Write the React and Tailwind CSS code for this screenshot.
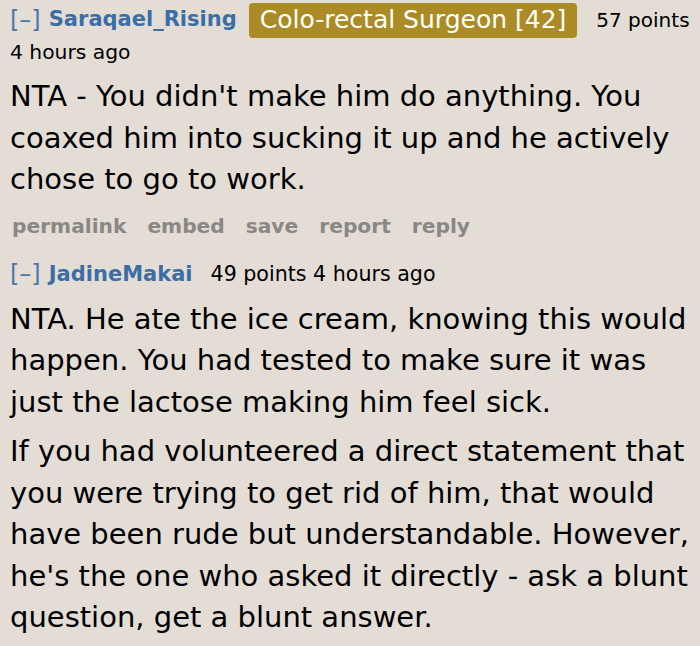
export default function App() {
  const font = { fontFamily: '"DejaVu Sans", Verdana, sans-serif' };
  return (
    <div className="h-[646px] w-[700px] overflow-hidden bg-[#e3ddd6] text-black" style={font}>
      <div className="pl-[10px] pr-[6px] pt-[2px]">
        <div className="flex h-[36px] items-center text-[21px]">
          <span className="text-[24px] font-normal text-[#4a78ad]">[–]</span>
          <span className="ml-[8px] font-bold text-[#3b6ea5]">Saraqael_Rising</span>
          <span className="ml-[12px] flex h-[35px] items-center rounded-[4px] bg-[#ab8b26] px-[11px] text-[25px] text-white">
            Colo-rectal Surgeon [42]
          </span>
          <span className="ml-[19px] text-[20px]">57 points</span>
        </div>
        <div className="text-[20.3px] leading-[28px]">4 hours ago</div>
        <div className="mt-[10px] text-[29px] leading-[41.5px]">
          NTA - You didn't make him do anything. You coaxed him into sucking it up and he actively chose to go to work.
        </div>
        <div className="mt-[11px] flex gap-[21px] pl-[2px] text-[20.2px] font-bold leading-[28px] text-[#8a8784]">
          <span>permalink</span>
          <span>embed</span>
          <span>save</span>
          <span>report</span>
          <span>reply</span>
        </div>
        <div className="mt-[19px] flex items-center text-[21px] leading-[30px]">
          <span className="text-[24px] font-normal text-[#4a78ad]">[–]</span>
          <span className="ml-[8px] font-bold text-[#3b6ea5]">JadineMakai</span>
          <span className="ml-[18px] text-[20.6px]">49 points 4 hours ago</span>
        </div>
        <div className="mt-[10px] text-[29px] leading-[41.5px]">
          NTA. He ate the ice cream, knowing this would happen. You had tested to make sure it was just the lactose making him feel sick.
        </div>
        <div className="mt-[8px] text-[29px] leading-[41.5px]">
          If you had volunteered a direct statement that you were trying to get rid of him, that would have been rude but understandable. However, he's the one who asked it directly - ask a blunt question, get a blunt answer.
        </div>
      </div>
    </div>
  );
}
